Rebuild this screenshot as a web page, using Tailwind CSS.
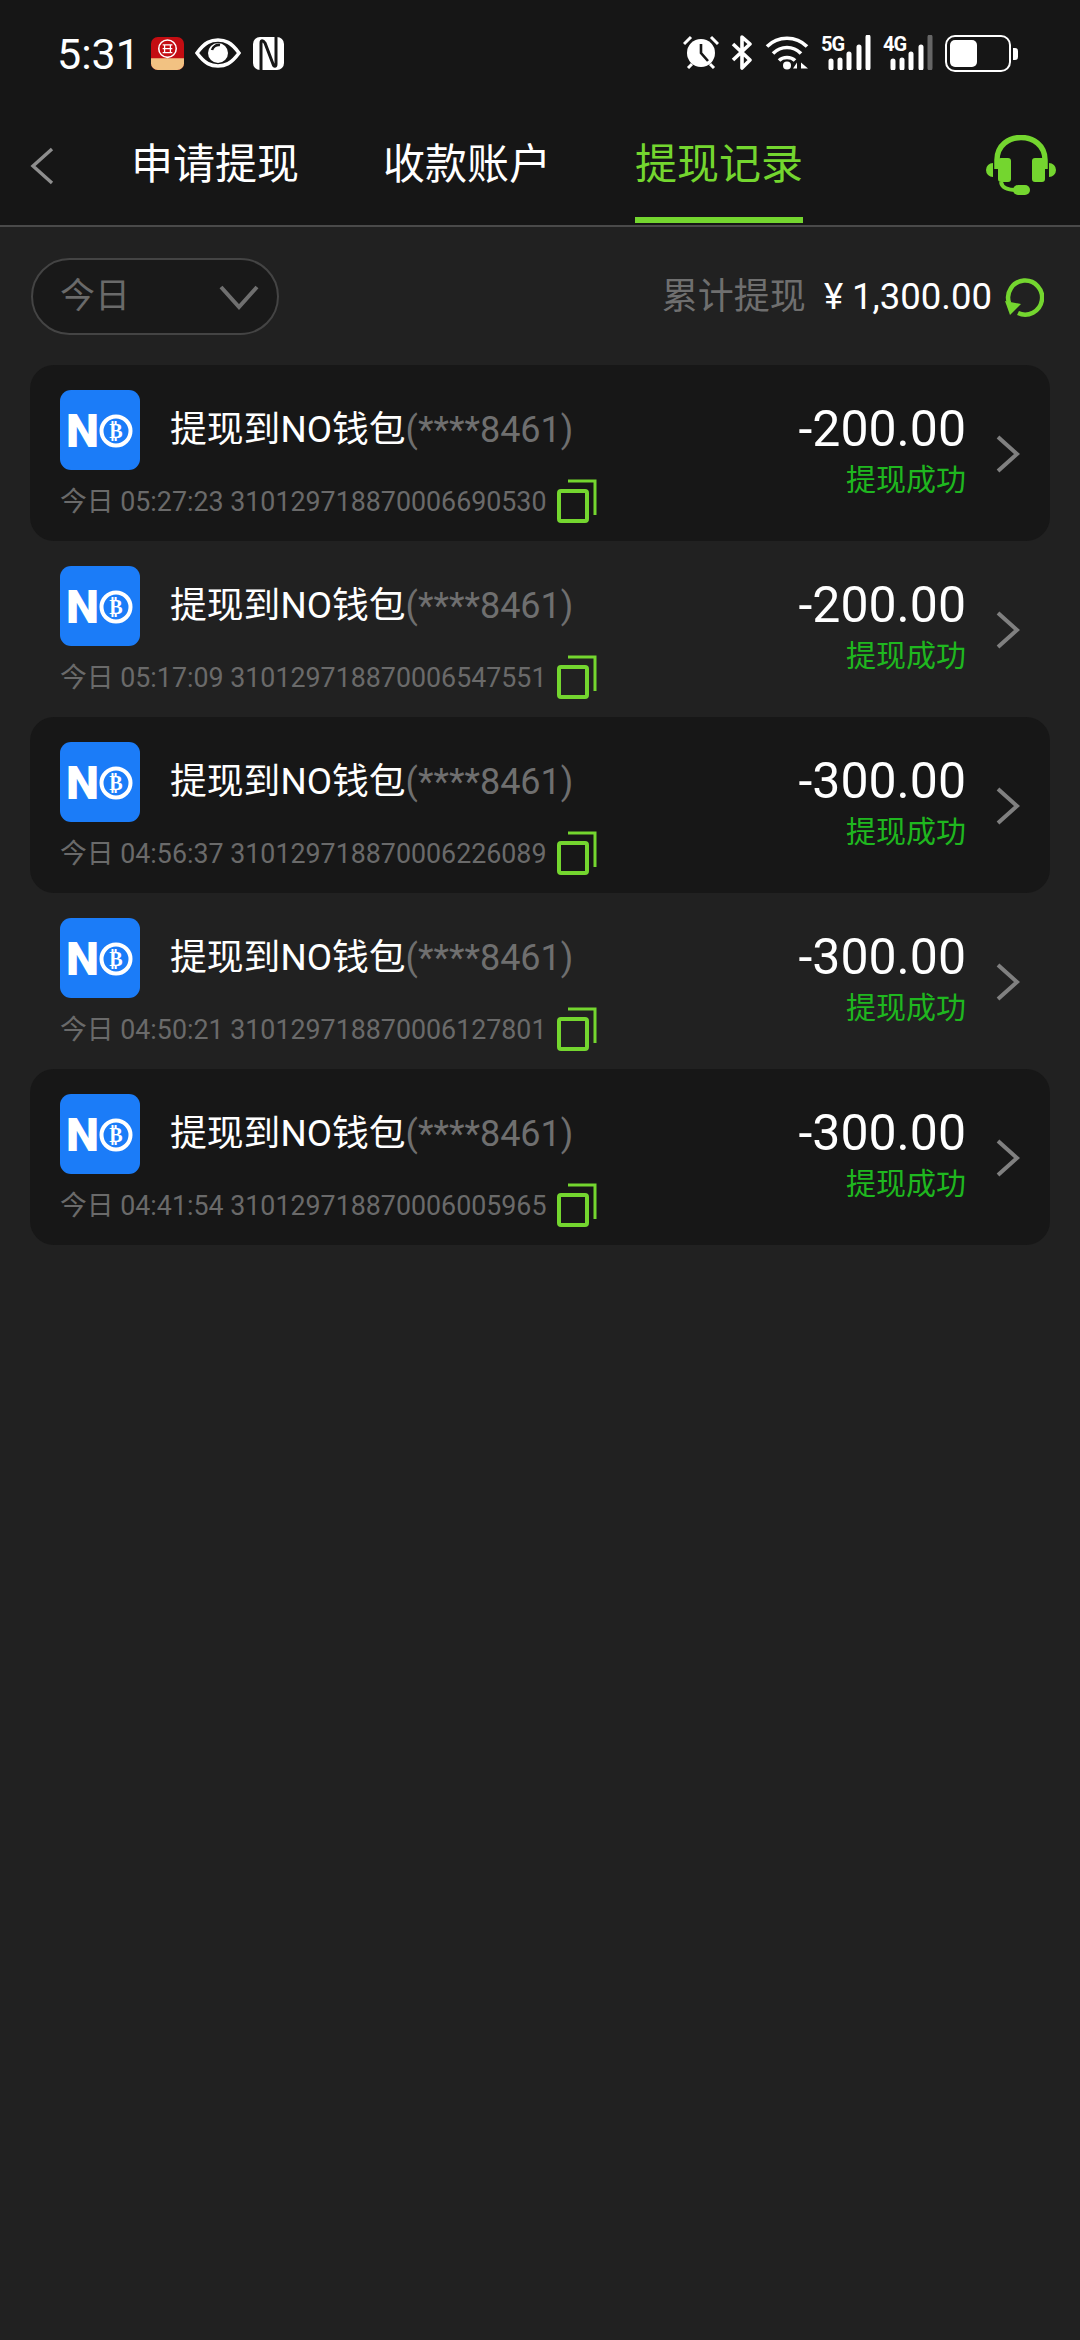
<!DOCTYPE html>
<html lang="zh">
  <head>
    <meta charset="UTF-8" />
    <title>提现记录</title>
    <script src="https://cdn.jsdelivr.net/npm/@tailwindcss/browser@4"></script>
  </head>
  <body class="bg-[#212121] font-['Roboto','Noto_Sans_CJK_SC',sans-serif]">
    <div class="w-[1080px] h-[2340px] flex flex-col">
      <!-- status bar -->
      <div class="h-[100px] bg-[#161616] flex justify-between pl-[57px] pr-[62px] pt-[30px] text-white">
        <div class="flex items-start h-[44px]">
          <span class="text-[43px] leading-[48px] w-[94px]">5:31</span>
          <svg class="mt-[7px]" width="33" height="33" viewBox="0 0 34 34">
            <rect width="34" height="34" rx="7" fill="#c40d12" />
            <path d="M0 22H34V27a7 7 0 0 1-7 7H7a7 7 0 0 1-7-7Z" fill="#f2c282" />
            <circle cx="17" cy="12" r="9" fill="none" stroke="#fff" stroke-width="1.6" />
            <path d="M12 8H22M12 16H22M12 12H22M14 8V16M20 8V16" stroke="#fff" stroke-width="1.3" />
          </svg>
          <svg class="ml-[11px] mt-[8px]" width="46" height="30" viewBox="0 0 46 30">
            <path d="M2 15C10 4 16 2 23 2S36 4 44 15C36 26 30 28 23 28S10 26 2 15Z" fill="none" stroke="#fff" stroke-width="3.5" />
            <circle cx="23" cy="15" r="10" fill="#fff" />
            <path d="M17 12a7 7 0 0 1 8-5" fill="none" stroke="#161616" stroke-width="2.5" />
          </svg>
          <svg class="ml-[12px] mt-[7px]" width="31" height="33" viewBox="0 0 31 33">
            <rect width="31" height="33" rx="7" fill="#fff" />
            <path d="M8 33V6C8 3 10 3 12 6L20 27C21 30 23 30 23 27V0" fill="none" stroke="#161616" stroke-width="3" />
          </svg>
        </div>
        <div class="flex items-start gap-[12px] mt-[5px]">
          <svg width="36" height="34" viewBox="0 0 36 34">
            <circle cx="18" cy="18" r="14" fill="#fff" />
            <path d="M18 9V18L25 26" fill="none" stroke="#161616" stroke-width="2.6" />
            <path d="M1 9 8 2M35 9 28 2M5 33 9 29M31 33 27 29" stroke="#fff" stroke-width="3" />
          </svg>
          <svg width="22" height="35" viewBox="0 0 22 35">
            <path d="M2 9 19 25 11 33V2L19 9 2 25" fill="none" stroke="#fff" stroke-width="3.6" stroke-linejoin="round" />
          </svg>
          <svg width="44" height="35" viewBox="0 0 44 34">
            <path d="M2 11C13 0 31 0 42 11M8 18C16 10 28 10 36 18M14 25C18 21 26 21 30 25" fill="none" stroke="#fff" stroke-width="3.6" />
            <circle cx="22" cy="30" r="4" fill="#fff" />
            <path d="M32 33V27L28 33ZM36 27V33L43 33Z" fill="#fff" />
          </svg>
          <div class="relative w-[50px] h-[35px]">
            <span class="absolute left-0 top-[-2px] text-[20px] leading-[22px] font-bold tracking-[-1px]">5G</span>
            <svg class="absolute left-0 top-0" width="50" height="35" viewBox="0 0 50 35">
              <path d="M10 26V33M19 25V33M28 19V33M38 12V33M47 2V33" stroke="#fff" stroke-width="5" stroke-linecap="round" />
            </svg>
          </div>
          <div class="relative w-[50px] h-[35px]">
            <span class="absolute left-0 top-[-2px] text-[20px] leading-[22px] font-bold tracking-[-1px]">4G</span>
            <svg class="absolute left-0 top-0" width="50" height="35" viewBox="0 0 50 35">
              <path d="M10 26V33M19 25V33M28 19V33M38 12V33" stroke="#fff" stroke-width="5" stroke-linecap="round" />
              <path d="M47 2V33" stroke="#666" stroke-width="5" stroke-linecap="round" />
            </svg>
          </div>
          <div class="flex items-center h-[37px]">
            <div class="w-[66px] h-[37px] rounded-[10px] border-[2.5px] border-white p-[3px]">
              <div class="w-[27px] h-full rounded-[5px] bg-white"></div>
            </div>
            <div class="ml-[2px] w-[5px] h-[12px] rounded-r-[3px] bg-white"></div>
          </div>
        </div>
      </div>

      <!-- tabs -->
      <div class="h-[127px] bg-[#161616] border-b-2 border-[#4a4a4a] flex">
        <svg class="ml-[30px] mt-[47px]" width="24" height="38" viewBox="0 0 24 38">
          <path d="M22 2 3 19 22 36" fill="none" stroke="#8e8e8e" stroke-width="3.4" />
        </svg>
        <div class="ml-[77px] w-[168px] mt-[40px] text-[42px] leading-[50px] text-white whitespace-nowrap">申请提现</div>
        <div class="ml-[84px] w-[168px] mt-[40px] text-[42px] leading-[50px] text-white whitespace-nowrap">收款账户</div>
        <div class="ml-[84px] w-[168px] h-[123px] border-b-[6px] border-[#74d62f] pt-[40px] text-[42px] leading-[50px] text-[#74d62f] whitespace-nowrap">提现记录</div>
        <svg class="ml-[183px] mt-[35px]" width="70" height="62" viewBox="0 0 70 62">
          <path d="M11 34V25C11 -5 59 -5 59 25V34" fill="none" stroke="#74d62f" stroke-width="5.5" />
          <rect x="12" y="23" width="13" height="24" rx="3" fill="#74d62f" />
          <rect x="46" y="23" width="13" height="24" rx="3" fill="#74d62f" />
          <path d="M7 28V42A7 7 0 0 1 7 28ZM63 28V42A7 7 0 0 0 63 28Z" fill="#74d62f" />
          <path d="M15 47C16 53 21 55 30 55" fill="none" stroke="#74d62f" stroke-width="4" />
          <rect x="27" y="50" width="17" height="10" rx="5" fill="#74d62f" />
        </svg>
      </div>

      <!-- filter row -->
      <div class="flex justify-between items-center pl-[31px] pr-[36px] pt-[31px]">
        <div class="w-[248px] h-[77px] rounded-full bg-[#191919] border-2 border-[#444] flex items-center pl-[27px] pr-[18px] justify-between">
          <span class="text-[35px] leading-[40px] text-[#6a6a6a]">今日</span>
          <svg width="40" height="26" viewBox="0 0 40 26">
            <path d="M2 3 20 23 38 3" fill="none" stroke="#6f6f6f" stroke-width="4" />
          </svg>
        </div>
        <div class="flex items-center">
          <span class="text-[36px] leading-[40px] text-[#6f6f6f]">累计提现</span>
          <span class="ml-[18px] text-[36.5px] leading-[40px] text-white">¥ 1,300.00</span>
          <svg class="ml-[12px]" width="40" height="40" viewBox="0 0 40 40">
            <path d="M5 26A17 17 0 1 1 14 36" fill="none" stroke="#74d62f" stroke-width="4.5" />
            <path d="M1 24 17 27 6 38Z" fill="#74d62f" />
          </svg>
        </div>
      </div>

      <!-- records -->
      <div id="list" class="mx-[30px] mt-[30px] flex flex-col"></div>
    </div>

    <script>
      const records = [
        { time: "05:27:23", no: "31012971887000669" + "0530", amount: "-200.00" },
        { time: "05:17:09", no: "31012971887000654" + "7551", amount: "-200.00" },
        { time: "04:56:37", no: "31012971887000622" + "6089", amount: "-300.00" },
        { time: "04:50:21", no: "31012971887000612" + "7801", amount: "-300.00" },
        { time: "04:41:54", no: "31012971887000600" + "5965", amount: "-300.00" },
      ];

      const list = document.getElementById("list");
      records.forEach((item, i) => {
        const row = document.createElement("div");
        row.className =
          "h-[176px] rounded-[24px] flex " + (i % 2 === 0 ? "bg-[#171717]" : "");
        row.innerHTML = `
          <div class="flex-1 pl-[30px] pt-[25px]">
            <div class="flex items-center h-[80px]">
              <svg width="80" height="80" viewBox="0 0 80 80">
                <rect width="80" height="80" rx="11" fill="#1b7cf8" />
                <text x="6" y="57" font-size="47" font-weight="900" fill="#fff" font-family="Roboto">N</text>
                <circle cx="56" cy="41" r="14.5" fill="none" stroke="#fff" stroke-width="4" />
                <text x="56" y="48" text-anchor="middle" font-size="20" font-weight="700" fill="#fff" font-family="Roboto">₿</text>
              </svg>
              <span class="ml-[30px] text-[36.8px] leading-[44px] text-white whitespace-nowrap">提现到NO钱包<span class="text-[36px] text-[#6f6f6f]">(****8461)</span></span>
            </div>
            <div class="flex items-start mt-[9px] h-[44px]">
              <span class="text-[26.8px] leading-[34px] mt-[6px] text-[#6a6a6a] whitespace-nowrap">今日 ${item.time} ${item.no}</span>
              <svg class="ml-[10px]" width="40" height="44" viewBox="0 0 40 44">
                <path d="M11 2H38V36" fill="none" stroke="#74d62f" stroke-width="3" />
                <rect x="2" y="12" width="28" height="30" rx="2" fill="none" stroke="#74d62f" stroke-width="4" />
              </svg>
            </div>
          </div>
          <div class="text-right mr-[29px] pt-[34px]">
            <div class="text-[50px] leading-[60px] text-white">${item.amount}</div>
            <div class="mt-[3px] text-[30px] leading-[36px] text-[#1fb71f] whitespace-nowrap">提现成功</div>
          </div>
          <svg class="mr-[30px] mt-[70px]" width="25" height="38" viewBox="0 0 25 38">
            <path d="M3 2 22 19 3 36" fill="none" stroke="#808080" stroke-width="4" />
          </svg>
        `;
        list.appendChild(row);
      });
    </script>
  </body>
</html>
